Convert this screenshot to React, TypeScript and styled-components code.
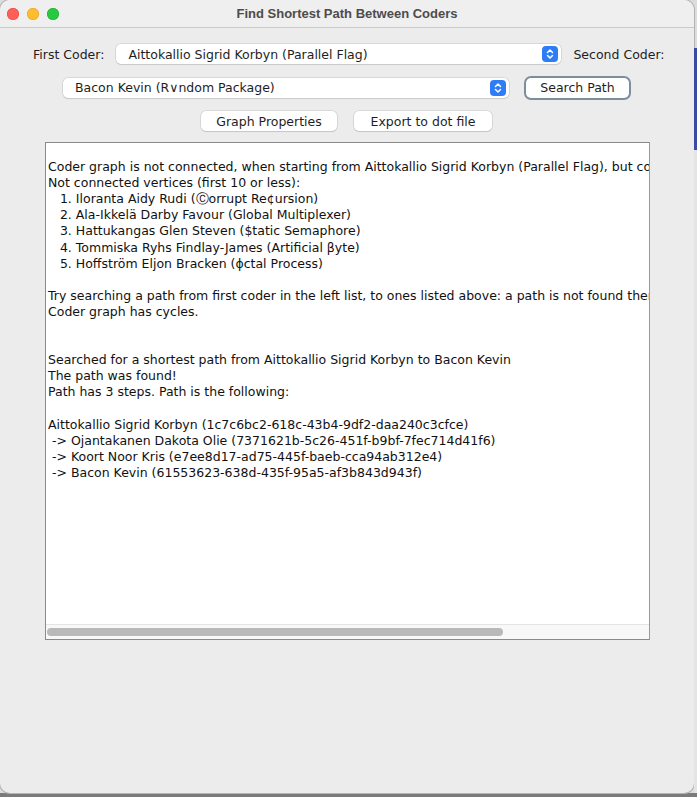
import styled, { createGlobalStyle } from "styled-components";

const GlobalStyle = createGlobalStyle`
  html, body {
    margin: 0;
    padding: 0;
    width: 697px;
    height: 797px;
    overflow: hidden;
    background: #6f6f6f;
  }
  * { box-sizing: border-box; }
`;

const uiFont = `"DejaVu Sans", "Liberation Sans", Arial, sans-serif`;

const Desktop = styled.div`
  width: 697px;
  height: 797px;
  display: flex;
  align-items: flex-start;
  background: linear-gradient(#dcdcdc, #dcdcdc) top / 100% 793px no-repeat, #7a7a7a;
  font-family: ${uiFont};
`;

const Window = styled.div`
  width: 694px;
  height: 793px;
  flex: none;
  display: flex;
  flex-direction: column;
  background: #ececec;
  border-radius: 10px;
  overflow: hidden;
  box-shadow: 0 0 0 1px #b4b4b4;
`;

const Behind = styled.div`
  flex: 1;
  display: flex;
  flex-direction: column;
  padding-top: 48px;
`;

const BehindBlock = styled.div<{ $h: number; $c: string }>`
  height: ${(p) => p.$h}px;
  background: ${(p) => p.$c};
`;

const TitleBar = styled.div`
  height: 28px;
  flex: none;
  display: flex;
  align-items: center;
  position: relative;
  background: #efefef;
  border-bottom: 1px solid #c9c9c9;
`;

const Lights = styled.div`
  display: flex;
  gap: 8px;
  padding-left: 7px;
`;

const Light = styled.span<{ $c: string; $b: string }>`
  width: 12px;
  height: 12px;
  border-radius: 50%;
  background: ${(p) => p.$c};
  box-shadow: inset 0 0 0 0.5px ${(p) => p.$b};
`;

const Title = styled.div`
  position: absolute;
  left: 0;
  right: 0;
  text-align: center;
  font-family: "Liberation Sans", Arial, sans-serif;
  font-size: 13px;
  font-weight: 700;
  color: #4c4c4c;
  pointer-events: none;
`;

const Body = styled.div`
  flex: 1;
  display: flex;
  flex-direction: column;
  align-items: flex-start;
  padding-top: 15px;
`;

const Row = styled.div<{ $left: number; $gap: number }>`
  display: flex;
  align-items: center;
  gap: ${(p) => p.$gap}px;
  padding-left: ${(p) => p.$left}px;
  height: 22px;
  margin-bottom: 11.5px;
`;

const Label = styled.span`
  font-size: 12.5px;
  color: #1e1e1e;
  white-space: nowrap;
`;

const Combo = styled.div<{ $w: number }>`
  width: ${(p) => p.$w}px;
  height: 20px;
  display: flex;
  align-items: center;
  justify-content: space-between;
  padding: 0 3px 0 12px;
  background: #fff;
  border-radius: 5px;
  box-shadow: 0 0 0 0.5px #c3c3c3, 0 1px 1px rgba(0, 0, 0, 0.12);
  font-size: 12.5px;
  color: #1e1e1e;
  white-space: nowrap;
`;

const Stepper = styled.span`
  width: 16px;
  height: 16px;
  border-radius: 4px;
  background: #2e7cf6;
  display: flex;
  align-items: center;
  justify-content: center;
`;

const Button = styled.button<{ $w: number; $focus?: boolean }>`
  width: ${(p) => p.$w}px;
  height: 20px;
  padding: 0;
  border: none;
  border-radius: 5px;
  background: #fff;
  font-family: inherit;
  font-size: 12.5px;
  color: #1e1e1e;
  box-shadow: ${(p) =>
    p.$focus
      ? "0 0 0 2px #7d8da0, 0 1px 1px rgba(0,0,0,0.15)"
      : "0 0 0 0.5px #c3c3c3, 0 1px 1px rgba(0, 0, 0, 0.15)"};
`;

const TextPanel = styled.div`
  margin: -1.5px 0 0 45px;
  width: 605px;
  height: 498px;
  display: flex;
  flex-direction: column;
  background: #fff;
  border: 1px solid #8a8a8a;
  border-right-color: #9a9a9a;
`;

const TextArea = styled.pre`
  flex: 1;
  margin: 0;
  padding: 0 0 0 2px;
  overflow: hidden;
  font-family: ${uiFont};
  font-size: 12.5px;
  line-height: 16.1px;
  color: #111;
  white-space: pre;
`;

const HScroll = styled.div`
  height: 15px;
  flex: none;
  display: flex;
  align-items: center;
  padding: 0 1px;
  background: #f8f8f8;
  border-top: 1px solid #e4e4e4;
`;

const Thumb = styled.div`
  width: 456px;
  height: 8px;
  border-radius: 4px;
  background: #b9b9b9;
`;

const Chevrons = () => (
  <svg width="10" height="12" viewBox="0 0 10 12">
    <path
      d="M2.5 4.5 L5 2 L7.5 4.5 M2.5 7.5 L5 10 L7.5 7.5"
      fill="none"
      stroke="#fff"
      strokeWidth="1.5"
      strokeLinecap="round"
      strokeLinejoin="round"
    />
  </svg>
);

const lines = [
  "",
  "Coder graph is not connected, when starting from Aittokallio Sigrid Korbyn (Parallel Flag), but coders are",
  "Not connected vertices (first 10 or less):",
  "   1. Iloranta Aidy Rudi (\u24b8orrupt Re\u00a2ursion)",
  "   2. Ala-Ikkel\u00e4 Darby Favour (Global Multiplexer)",
  "   3. Hattukangas Glen Steven ($tatic Semaphore)",
  "   4. Tommiska Ryhs Findlay-James (Artificial \u03b2yte)",
  "   5. Hoffstr\u00f6m Eljon Bracken (\u0278ctal Process)",
  "",
  "Try searching a path from first coder in the left list, to ones listed above: a path is not found then.",
  "Coder graph has cycles.",
  "",
  "",
  "Searched for a shortest path from Aittokallio Sigrid Korbyn to Bacon Kevin",
  "The path was found!",
  "Path has 3 steps. Path is the following:",
  "",
  "Aittokallio Sigrid Korbyn (1c7c6bc2-618c-43b4-9df2-daa240c3cfce)",
  " -> Ojantakanen Dakota Olie (7371621b-5c26-451f-b9bf-7fec714d41f6)",
  " -> Koort Noor Kris (e7ee8d17-ad75-445f-baeb-cca94ab312e4)",
  " -> Bacon Kevin (61553623-638d-435f-95a5-af3b843d943f)",
];

export default function App() {
  return (
    <Desktop>
      <GlobalStyle />
      <Window>
        <TitleBar>
          <Lights>
            <Light $c="#fe5f57" $b="#e14640" />
            <Light $c="#febc2e" $b="#dfa023" />
            <Light $c="#28c840" $b="#1aab29" />
          </Lights>
          <Title>Find Shortest Path Between Coders</Title>
        </TitleBar>
        <Body>
          <Row $left={33} $gap={12}>
            <Label>First Coder:</Label>
            <Combo $w={445}>
              {"Aittokallio Sigrid Korbyn (Parallel Flag)"}
              <Stepper>
                <Chevrons />
              </Stepper>
            </Combo>
            <Label>Second Coder:</Label>
          </Row>
          <Row $left={63} $gap={17}>
            <Combo $w={446}>
              {"Bacon Kevin (R\u2228ndom Package)"}
              <Stepper>
                <Chevrons />
              </Stepper>
            </Combo>
            <Button $w={103} $focus>
              Search Path
            </Button>
          </Row>
          <Row $left={201} $gap={17}>
            <Button $w={136}>Graph Properties</Button>
            <Button $w={138}>Export to dot file</Button>
          </Row>
          <TextPanel>
            <TextArea>{lines.join("\n")}</TextArea>
            <HScroll>
              <Thumb />
            </HScroll>
          </TextPanel>
        </Body>
      </Window>
      <Behind>
        <BehindBlock $h={102} $c="#3d4aa3" />
        <BehindBlock $h={643} $c="#e4e4e4" />
      </Behind>
    </Desktop>
  );
}
